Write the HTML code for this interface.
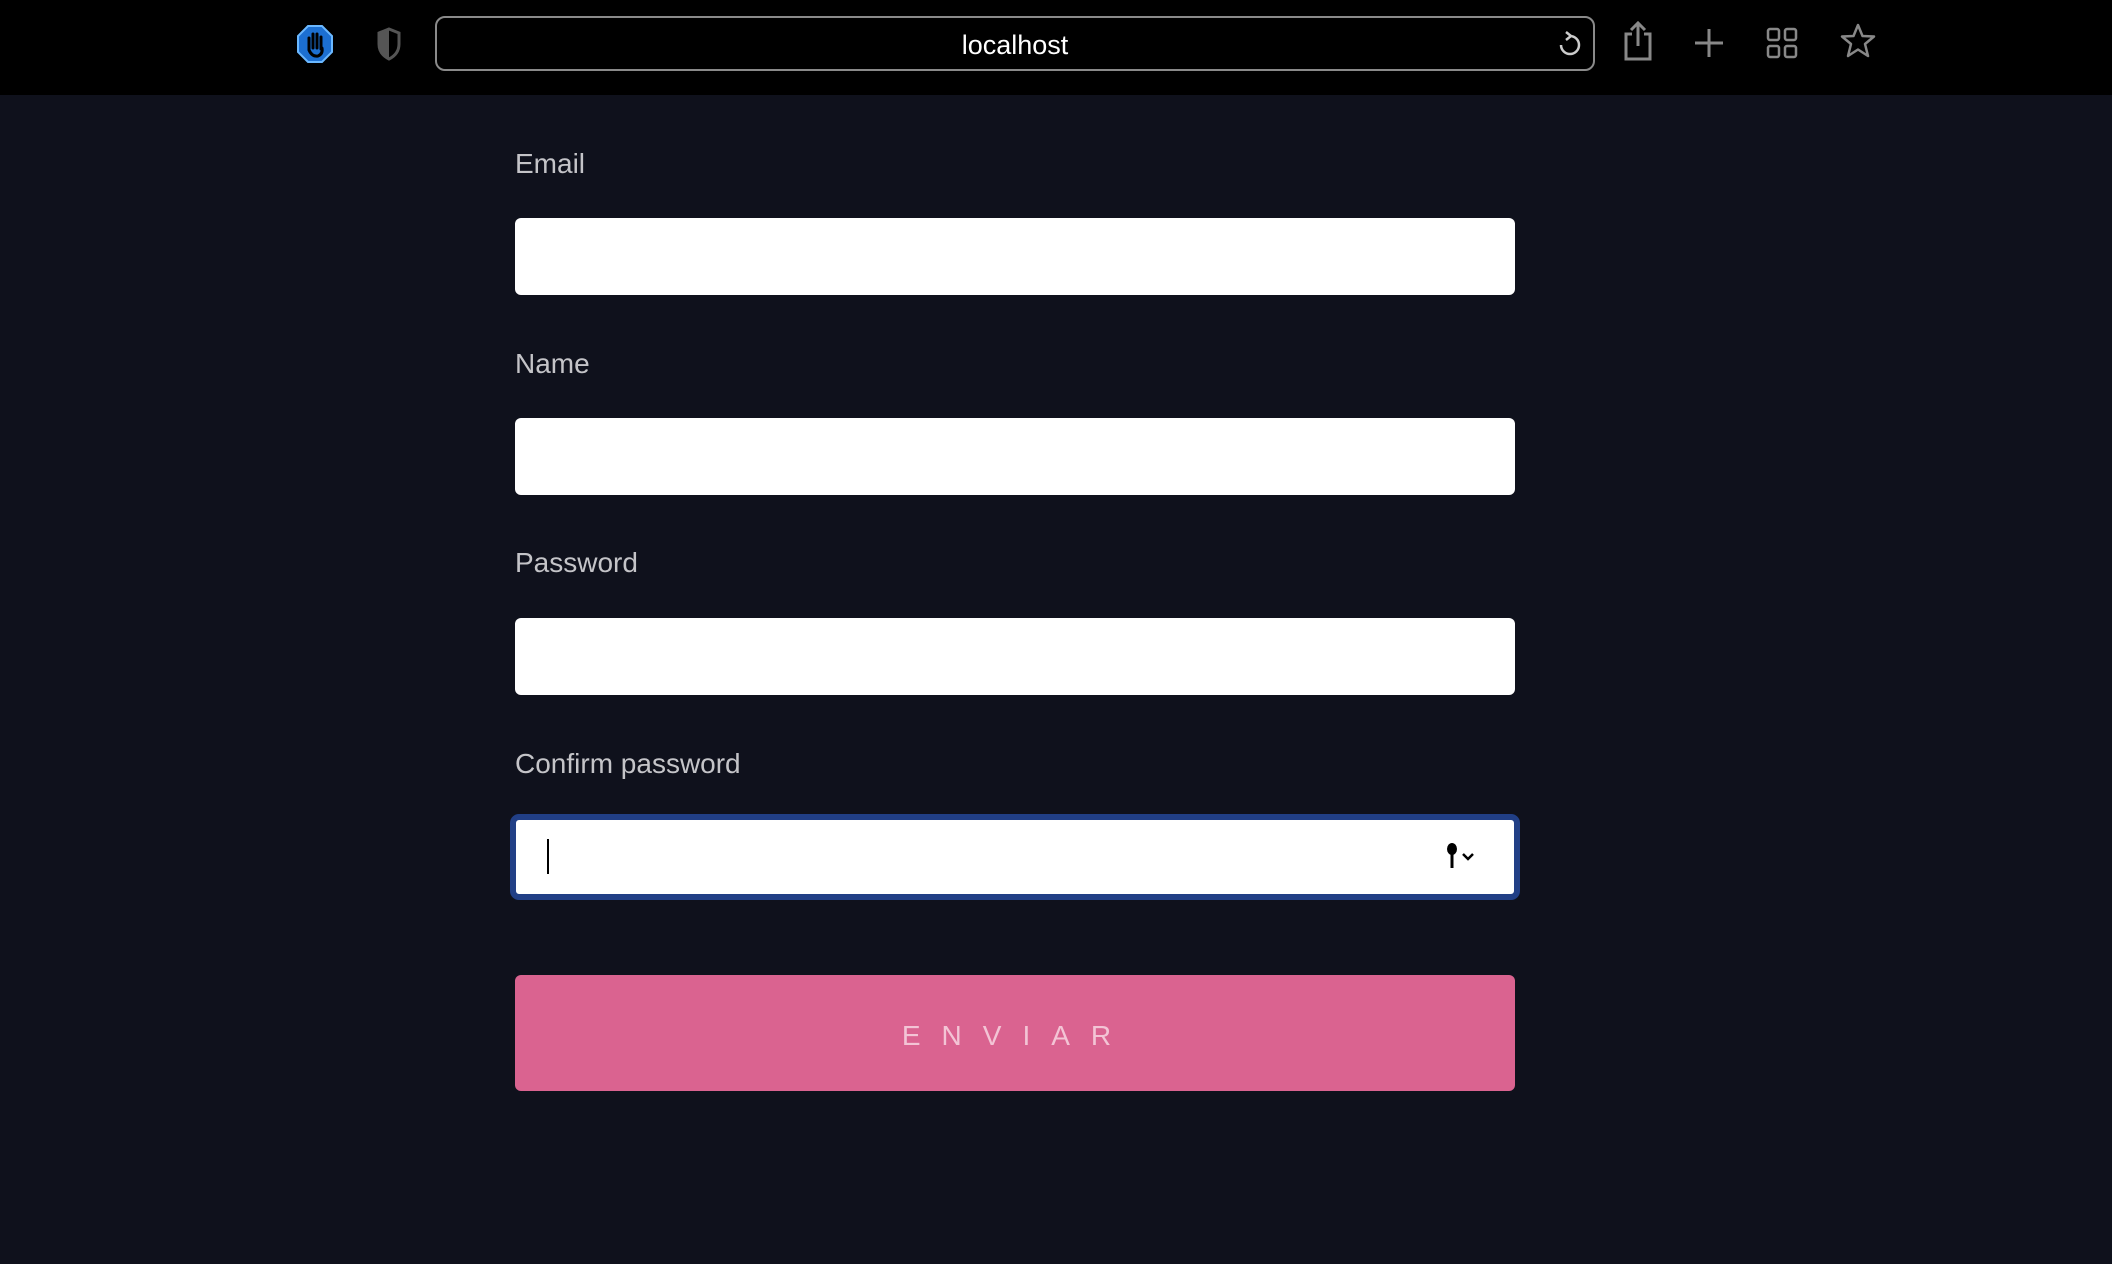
<!DOCTYPE html>
<html><head><meta charset="utf-8"><style>
*{margin:0;padding:0;box-sizing:border-box}
body{width:2112px;height:1264px;background:#0f111c;font-family:"Liberation Sans",sans-serif;position:relative;overflow:hidden}
.bar{position:absolute;left:0;top:0;width:2112px;height:95px;background:#000}
.addr{position:absolute;left:435px;top:16px;width:1160px;height:55px;border:2px solid #8a8a8a;border-radius:10px;color:#fff;font-size:27px;text-align:center;line-height:55px}
.lbl{position:absolute;left:515px;color:#c4c4c8;font-size:28px;font-weight:300;transform:translateY(-50%)}
.inp{position:absolute;left:515px;width:1000px;height:77px;background:#fff;border-radius:6px}
.btn{position:absolute;left:515px;top:975px;width:1000px;height:116px;background:#da6390;border-radius:6px;color:#f3c4d5;font-size:28px;text-align:center;line-height:122px;letter-spacing:21px;padding-left:4px}
svg{position:absolute}
</style></head><body>
<div class="bar"></div>
<svg style="left:296px;top:24px" width="38" height="40" viewBox="0 0 38 40"><polygon points="12,2 26,2 36,12 36,28 26,38 12,38 2,28 2,12" fill="#1c6fd1" stroke="#6bb8ff" stroke-width="2"/><path d="M13 26 V14 M17 24 V10 M21 24 V10 M25 25 V13 M13 26 Q16 33 22 32 Q27 30 26 24" stroke="#000" stroke-width="3" fill="none" stroke-linecap="round"/></svg>
<svg style="left:376px;top:27px" width="26" height="34" viewBox="0 0 26 34"><path d="M13 2 L23 6 V17 Q23 27 13 32 Q3 27 3 17 V6 Z" fill="none" stroke="#555" stroke-width="3"/><path d="M13 2 L3 6 V17 Q3 27 13 32Z" fill="#555"/></svg>
<div class="addr">localhost</div>
<svg style="left:1556px;top:31px" width="26" height="28" viewBox="0 0 26 28"><path d="M14 5 A9 9 0 1 1 5 14" fill="none" stroke="#ccc" stroke-width="2.5"/><path d="M10 1 L15 5 L10 9" fill="none" stroke="#ccc" stroke-width="2.5"/></svg>
<svg style="left:1622px;top:20px" width="32" height="42" viewBox="0 0 32 42"><path d="M10 14 H4 V39 H28 V14 H22 M16 26 V3 M9 10 L16 3 L23 10" fill="none" stroke="#888" stroke-width="3"/></svg>
<svg style="left:1693px;top:27px" width="32" height="32" viewBox="0 0 32 32"><path d="M16 2 V30 M2 16 H30" stroke="#888" stroke-width="3"/></svg>
<svg style="left:1766px;top:27px" width="32" height="32" viewBox="0 0 32 32" fill="none" stroke="#888" stroke-width="2.5"><rect x="2" y="2" width="11" height="11" rx="2"/><rect x="19" y="2" width="11" height="11" rx="2"/><rect x="2" y="19" width="11" height="11" rx="2"/><rect x="19" y="19" width="11" height="11" rx="2"/></svg>
<svg style="left:1840px;top:23px" width="36" height="36" viewBox="0 0 36 36"><polygon points="18,2 22.5,13 34,13.5 25,21 28,33 18,26.5 8,33 11,21 2,13.5 13.5,13" fill="none" stroke="#888" stroke-width="2.5" stroke-linejoin="round"/></svg>
<div class="lbl" style="top:164px">Email</div>
<div class="inp" style="top:218px"></div>
<div class="lbl" style="top:364px">Name</div>
<div class="inp" style="top:418px"></div>
<div class="lbl" style="top:563px">Password</div>
<div class="inp" style="top:618px"></div>
<div class="lbl" style="top:764px">Confirm password</div>
<div class="inp" style="top:814px;left:510px;width:1010px;height:86px;border:6px solid #213f86;border-radius:9px"></div>
<div style="position:absolute;left:547px;top:839px;width:2px;height:35px;background:#000"></div>
<svg style="left:1443px;top:843px" width="36" height="28" viewBox="0 0 36 28"><ellipse cx="9" cy="6" rx="5" ry="6" fill="#000"/><rect x="7.5" y="10" width="3" height="15" fill="#000"/><path d="M20 11 L25 16 L30 11" fill="none" stroke="#000" stroke-width="2.5"/></svg>
<div class="btn">ENVIAR</div>
</body></html>
